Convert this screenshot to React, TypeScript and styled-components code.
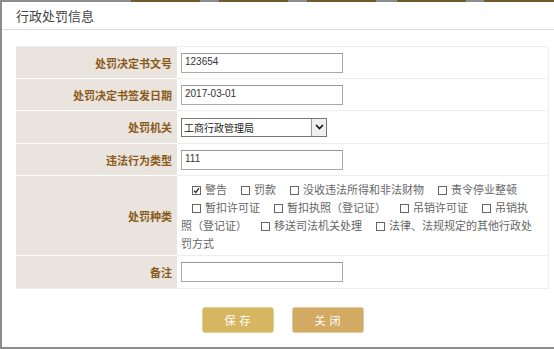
import React from "react";
import styled, { createGlobalStyle } from "styled-components";

const Global = createGlobalStyle`
  html, body { margin: 0; padding: 0; background: #fff; }
  body { font-family: "Noto Sans CJK SC", "Liberation Sans", sans-serif; }
  * { box-sizing: border-box; }
`;

const Frame = styled.div`
  width: 554px;
  height: 349px;
  display: flex;
  flex-direction: column;
  overflow: hidden;
`;

const Strip = styled.div`
  display: flex;
  height: 2px;
  flex: none;
`;

const Seg = styled.div<{ $w: number; $dark?: boolean }>`
  width: ${(p) => p.$w}px;
  flex: none;
  background: ${(p) => (p.$dark ? "#6f5b30" : "#8d8d8d")};
`;

const Body = styled.div`
  flex: 1;
  border-left: 2px solid #8c8c8c;
  border-bottom: 2px solid #8c8c8c;
  display: flex;
  flex-direction: column;
`;

const Header = styled.div`
  height: 28px;
  flex: none;
  padding-left: 14px;
  display: flex;
  align-items: center;
  font-size: 13px;
  color: #444;
  border-bottom: 1px solid #dcdcdc;
`;

const Content = styled.div`
  padding: 16px 0 0 14px;
  width: 547px;
`;

const Table = styled.div`
  display: grid;
  grid-template-columns: 161px 1fr;
  border-top: 1px solid #eeeeee;
  border-right: 1px solid #eeeeee;
  border-bottom: 1px solid #eeeeee;
`;

const Label = styled.div<{ $h: number }>`
  height: ${(p) => p.$h}px;
  background: #e9e4dd;
  border-bottom: 1px solid #fff;
  display: flex;
  align-items: center;
  justify-content: flex-end;
  padding-right: 5px;
  font-size: 11px;
  font-weight: bold;
  color: #8b5a1b;
  &:nth-last-child(2) { border-bottom: none; }
`;

const Value = styled.div<{ $h: number }>`
  height: ${(p) => p.$h}px;
  border-bottom: 1px solid #eeeeee;
  display: flex;
  align-items: center;
  padding-left: 4px;
  &:last-child { border-bottom: none; }
`;

const TextInput = styled.input`
  width: 162px;
  height: 20px;
  border: 1px solid #a9a9a9;
  border-top-color: #999;
  padding: 0 3px 3px;
  font-family: "Liberation Sans", Arial, sans-serif;
  font-size: 10px;
  color: #333;
  outline: none;
  background: #fff;
`;

const SelectWrap = styled.div`
  position: relative;
  width: 146px;
  height: 19px;
  border: 1px solid #767676;
  display: flex;
  background: #fff;
`;

const Select = styled.select`
  appearance: none;
  border: none;
  flex: 1;
  padding: 0 2px;
  margin: 0;
  font-family: "Noto Sans CJK SC", sans-serif;
  font-size: 10px;
  color: #222;
  background: transparent;
  outline: none;
`;

const Arrow = styled.div`
  width: 15px;
  flex: none;
  border-left: 1px solid #9a9a9a;
  background: #f0f0f0;
  display: flex;
  align-items: center;
  justify-content: center;
  pointer-events: none;
`;

const Checks = styled.div`
  padding: 4px 10px 4px 0;
  font-size: 11px;
  line-height: 18px;
  color: #666;
  align-self: stretch;
`;

const Item = styled.label`
  padding-left: 11px;
  margin-right: 3px;
`;

const Box = styled.span`
  display: inline-block;
  width: 9px;
  height: 9px;
  border: 1px solid #666;
  margin-right: 4px;
  vertical-align: -1px;
  position: relative;
  background: #fff;
`;

const Tick = styled.svg`
  position: absolute;
  left: 0;
  top: 0;
`;

const Buttons = styled.div`
  display: flex;
  justify-content: center;
  gap: 18px;
  margin-top: 18px;
`;

const Button = styled.button<{ $bg: string }>`
  width: 72px;
  height: 26px;
  border: 1px solid #e2cf97;
  border-radius: 3px;
  background: ${(p) => p.$bg};
  color: #fff;
  font-family: "Noto Sans CJK SC", sans-serif;
  font-size: 11px;
  letter-spacing: 4px;
  padding: 0 0 0 4px;
`;

const segs: [number, boolean][] = [
  [131, false], [69, true], [19, false], [69, true], [19, false], [69, true],
  [21, false], [69, true], [18, false], [70, true],
];

const options = [
  { label: "警告", checked: true },
  { label: "罚款" },
  { label: "没收违法所得和非法财物" },
  { label: "责令停业整顿" },
  { label: "暂扣许可证" },
  { label: "暂扣执照（登记证）" },
  { label: "吊销许可证" },
  { label: "吊销执照（登记证）" },
  { label: "移送司法机关处理" },
  { label: "法律、法规规定的其他行政处罚方式" },
];

export default function App() {
  return (
    <>
      <Global />
      <Frame>
        <Strip>
          {segs.map(([w, d], i) => (
            <Seg key={i} $w={w} $dark={d} />
          ))}
        </Strip>
        <Body>
          <Header>行政处罚信息</Header>
          <Content>
            <Table>
              <Label $h={32}>处罚决定书文号</Label>
              <Value $h={32}>
                <TextInput defaultValue="123654" />
              </Value>
              <Label $h={32}>处罚决定书签发日期</Label>
              <Value $h={32}>
                <TextInput defaultValue="2017-03-01" />
              </Value>
              <Label $h={33}>处罚机关</Label>
              <Value $h={33}>
                <SelectWrap>
                  <Select defaultValue="gs">
                    <option value="gs">工商行政管理局</option>
                  </Select>
                  <Arrow>
                    <svg width="9" height="6" viewBox="0 0 9 6">
                      <path d="M1 1 L4.5 4.5 L8 1" stroke="#111" strokeWidth="1.6" fill="none" />
                    </svg>
                  </Arrow>
                </SelectWrap>
              </Value>
              <Label $h={32}>违法行为类型</Label>
              <Value $h={32}>
                <TextInput defaultValue="111" />
              </Value>
              <Label $h={80}>处罚种类</Label>
              <Value $h={80}>
                <Checks>
                  {options.map((o) => (
                    <Item key={o.label}>
                      <Box>
                        {o.checked && (
                          <Tick width="7" height="7" viewBox="0 0 7 7">
                            <path d="M1 3.6 L2.8 5.4 L6 1.2" stroke="#222" strokeWidth="1.3" fill="none" />
                          </Tick>
                        )}
                      </Box>
                      {o.label}
                    </Item>
                  ))}
                </Checks>
              </Value>
              <Label $h={32}>备注</Label>
              <Value $h={32}>
                <TextInput defaultValue="" />
              </Value>
            </Table>
            <Buttons>
              <Button $bg="#d6b660">保存</Button>
              <Button $bg="#d2aa63">关闭</Button>
            </Buttons>
          </Content>
        </Body>
      </Frame>
    </>
  );
}
